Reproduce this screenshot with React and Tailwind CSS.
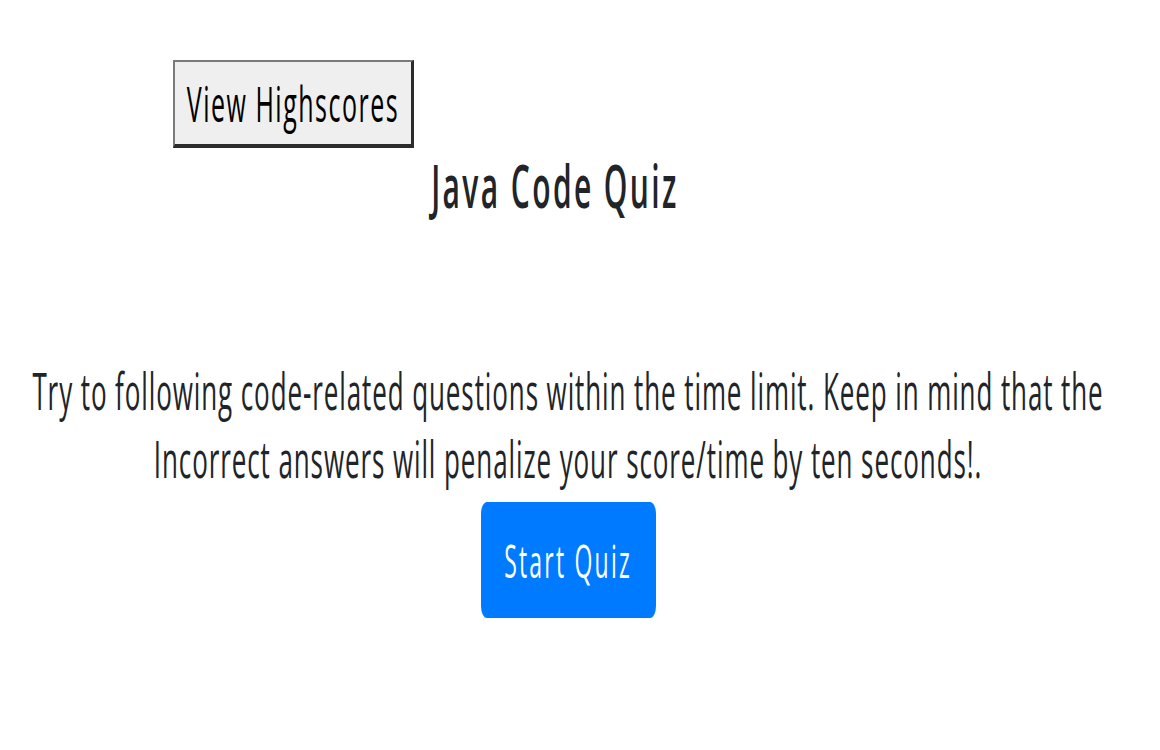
export default function App() {
  return (
    <div className="min-h-screen bg-white">
      {/* the reference is stretched vertically, so the page is laid out flat and scaled */}
      <div className="origin-top scale-y-200 font-['Open_Sans',sans-serif] text-[#212529]">
        <div className="pl-[173px] pt-[29.5px]">
          <button className="h-[44px] w-[241px] bg-[#efefef] text-[25px] leading-none tracking-[1.5px] text-black border-l-[2px] border-t-[1.5px] border-r-[3px] border-b-[2px] border-l-[#7a7a7a] border-t-[#7a7a7a] border-r-[#2b2b2b] border-b-[#2b2b2b]">
            View Highscores
          </button>
        </div>
        <h2 className="mt-[1.5px] pr-[50px] text-center text-[30px] font-semibold leading-[1.2] tracking-[2.4px]">Java Code Quiz</h2>
        <p className="mt-[68px] pr-[24px] text-center text-[26px] leading-[33.5px] tracking-[0.9px]">
          Try to following code-related questions within the time limit. Keep in mind that the
          <br />
          Incorrect answers will penalize your score/time by ten seconds!.
        </p>
        <div className="mt-[5px] flex justify-center pr-[24px]">
          <button className="flex h-[58px] w-[175px] items-center justify-center rounded-[6px] bg-[#007bff] text-[23px] tracking-[2.2px] text-white">
            Start Quiz
          </button>
        </div>
      </div>
    </div>
  );
}
